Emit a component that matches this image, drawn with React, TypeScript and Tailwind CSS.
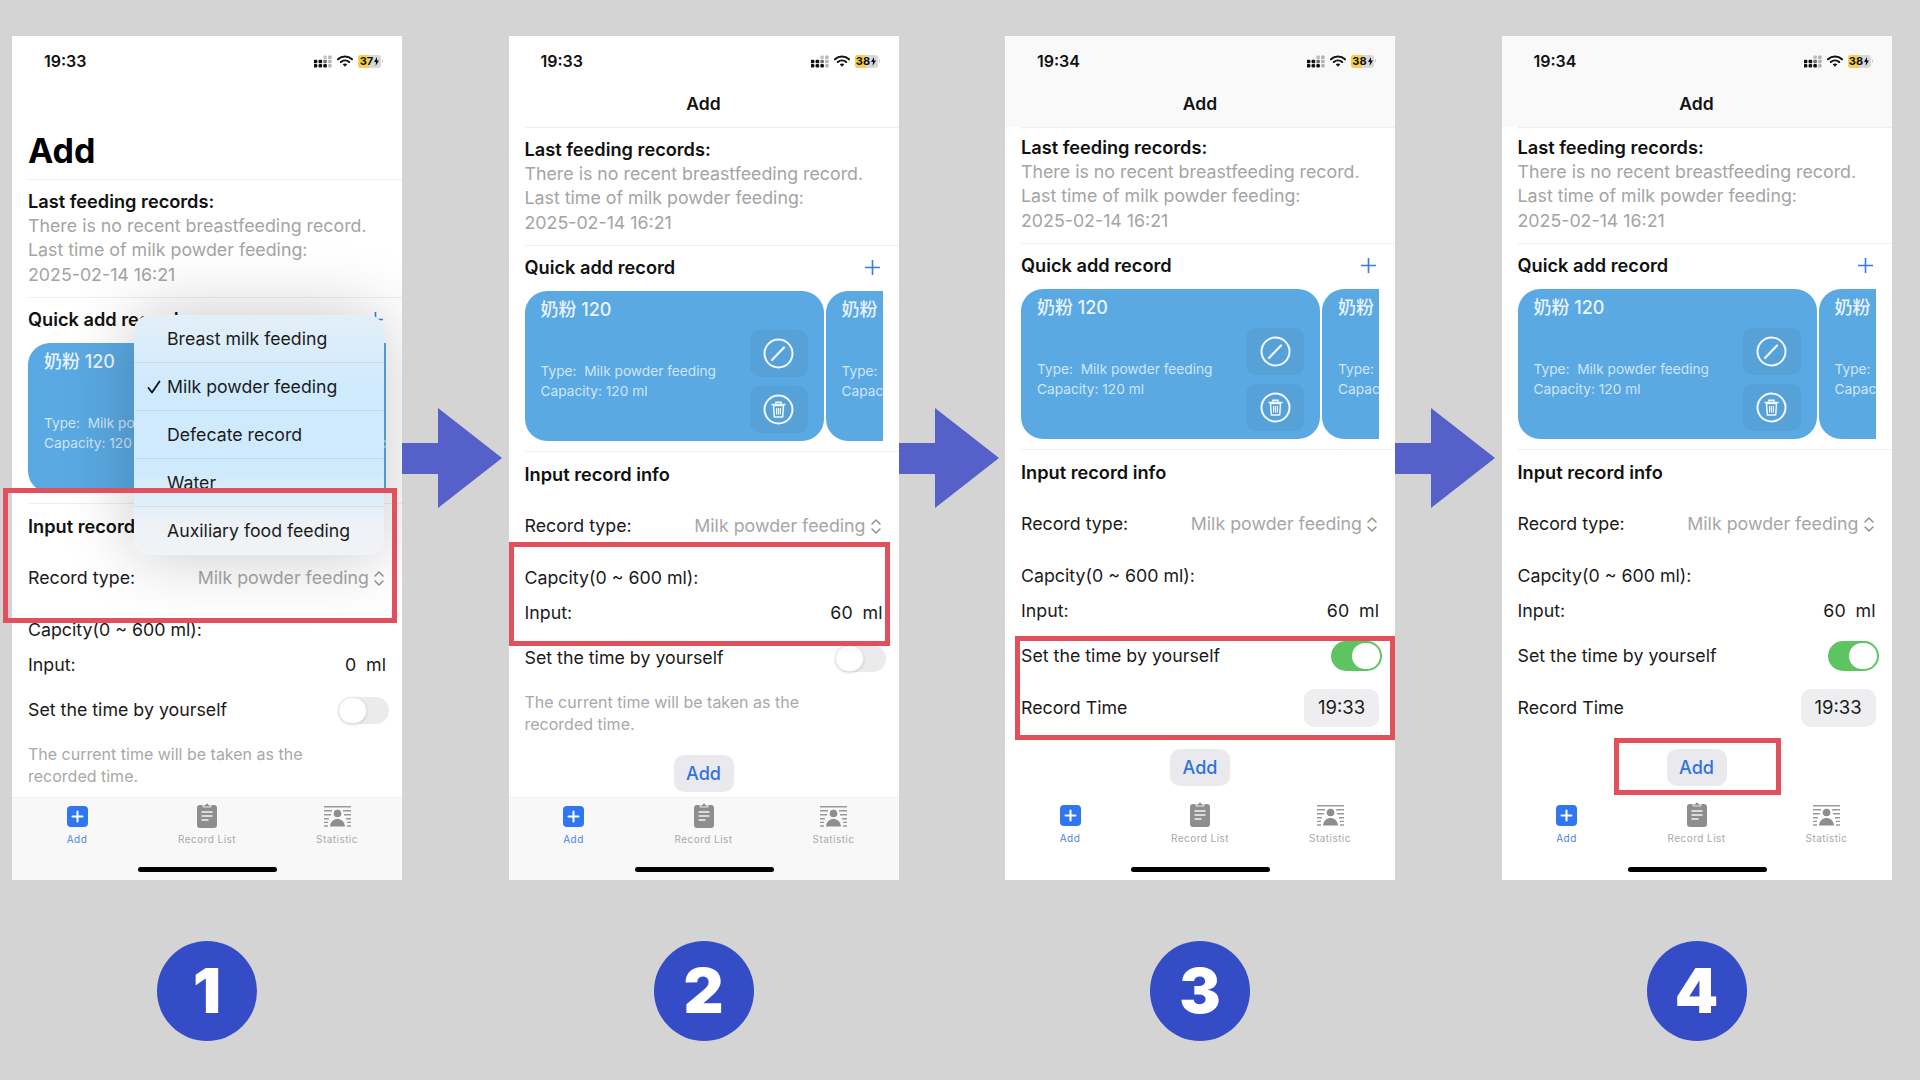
import React from "react";

function StatusIcons({ battery }: { battery: string }) {
  const dots: [number, number, number][] = [
    [1, 6, 1], [1, 10, 1], [5.5, 6, 1], [5.5, 10, 1], [10, 10, 1], [10, 6, 0.6], [10, 2, 0.25], [14.5, 10, 0.3], [14.5, 6, 0.3], [14.5, 2, 0.3],
  ];
  return (
    <div className="flex items-center gap-[5px]">
      <svg width="18" height="14" viewBox="0 0 17 13">
        {dots.map(([x, y, o], i) => (
          <rect key={i} x={x - 1.2} y={y - 0.7} width="3.4" height="3.4" rx="1" fill="#111" opacity={o} />
        ))}
      </svg>
      <svg width="16" height="12" viewBox="0 0 16 12">
        <path d="M1 4.200C5 .6 11 .6 15 4.200" fill="none" stroke="#111" strokeWidth="2.100" strokeLinecap="round" />
        <path d="M3.800 7C6.200 5 9.800 5 12.200 7" fill="none" stroke="#111" strokeWidth="2.100" strokeLinecap="round" />
        <path d="M8 11.800 5.700 9.200C7.100 8.200 8.900 8.200 10.300 9.200Z" fill="#111" />
      </svg>
      <div className="flex items-center">
        <div className="relative flex h-[13px] w-[23px] items-center overflow-hidden rounded-[3px] bg-[#d8d8d8]">
          <div className="h-full w-[11px] bg-[#f6d04d]" />
          <div className="absolute inset-0 flex items-center justify-center gap-[1px] text-[11px] leading-none font-bold text-[#111]">
            <span>{battery}</span>
            <svg width="5" height="9" viewBox="0 0 5 9"><path d="M3 0 0 5h2L1.600 9 5 3.600H3Z" fill="#111" /></svg>
          </div>
        </div>
        <div className="ml-[1px] h-[4px] w-[1px] rounded-r-sm bg-[#cfcfcf]" />
      </div>
    </div>
  );
}

function Card() {
  return (
    <div className="flex h-[150px] w-[299px] flex-none rounded-[22px] bg-[#5aa9e2] pr-[16px] pl-[16px]">
      <div className="flex-1">
        <div className="mt-[7px] h-[24px] text-[18px] leading-[24px] font-medium whitespace-nowrap text-[#eaf4fb]">奶粉 120</div>
        <div className="mt-[40px] text-[13.700px] leading-[19.500px] whitespace-nowrap text-[#cfe6f7]">
          <div>Type:&nbsp; Milk powder feeding</div>
          <div>Capacity: 120 ml</div>
        </div>
      </div>
      <div className="flex w-[58px] flex-none flex-col justify-end gap-[9px] pb-[8px]">
        <div className="flex h-[47px] items-center justify-center rounded-[10px] bg-[#55a1d8]">
          <svg width="31" height="31" viewBox="0 0 31 31" fill="none" stroke="#f4f9fd">
            <circle cx="15.500" cy="15.500" r="14" strokeWidth="2" />
            <path d="M9 22 21 9.500" strokeWidth="2.200" strokeLinecap="round" />
          </svg>
        </div>
        <div className="flex h-[47px] items-center justify-center rounded-[10px] bg-[#55a1d8]">
          <svg width="31" height="31" viewBox="0 0 31 31" fill="none" stroke="#f4f9fd">
            <circle cx="15.500" cy="15.500" r="14" strokeWidth="2" />
            <path d="M9 10.500h13M13 10V8.300h5V10" strokeWidth="1.500" strokeLinecap="round" />
            <path d="M10.500 11.500h10l-.8 11.500h-8.400Z" strokeWidth="1.500" strokeLinejoin="round" />
            <path d="M13.600 14v6.500M15.500 14v6.500M17.400 14v6.500" strokeWidth="1.200" />
          </svg>
        </div>
      </div>
    </div>
  );
}

function Toggle({ on }: { on: boolean }) {
  return on ? (
    <div className="mr-[-3px] flex h-[30px] w-[51px] items-center justify-end rounded-full bg-[#5ec462] pr-[2px]">
      <div className="h-[26px] w-[28px] rounded-full bg-white" />
    </div>
  ) : (
    <div className="mr-[-3px] flex h-[27px] w-[51px] items-center rounded-full bg-[#ebebec]">
      <div className="h-[27px] w-[29px] rounded-full border border-[#e6e6e6] bg-white shadow-sm" />
    </div>
  );
}

function TabBar({ grey }: { grey: boolean }) {
  return (
    <div className={`relative h-[83px] flex-none ${grey ? "border-t border-[#f0f0f0] bg-[#f8f8f9]" : "bg-white"}`}>
      <div className="grid grid-cols-3 text-[10px] leading-[12px] tracking-[0.45px]">
        <div className="flex flex-col items-center pt-[8px] text-[#4a86e0]">
          <svg width="21" height="21" viewBox="0 0 21 21">
            <rect width="21" height="21" rx="4" fill="#2f76f0" />
            <path d="M10.500 5.500v10M5.500 10.500h10" stroke="#fff" strokeWidth="2" strokeLinecap="round" />
          </svg>
          <div className="mt-[6px]">Add</div>
        </div>
        <div className="flex flex-col items-center pt-[4px] text-[#a8a8a8]">
          <svg width="20" height="26" viewBox="0 0 20 26">
            <rect y="3" width="20" height="23" rx="3" fill="#8e8e90" />
            <path d="M6 5V3h2.200a1.800 1.800 0 0 1 3.600 0H14v2Z" fill="#8e8e90" stroke="#fff" strokeWidth="0.800" />
            <path d="M4.500 10h11M4.500 14h11M4.500 18h7" stroke="#f4f4f4" strokeWidth="1.500" />
          </svg>
          <div className="mt-[5px]">Record List</div>
        </div>
        <div className="flex flex-col items-center pt-[8px] text-[#a8a8a8]">
          <svg width="27" height="21" viewBox="0 0 27 21">
            <path d="M0 .8h27M0 4.800h8M19 4.800h8M0 8.800h7M20 8.800h7M0 12.800h5M22 12.800h5M0 20h4M23 20h4" stroke="#9a9a9c" strokeWidth="1.400" />
            <path d="M0 16.400h4M23 16.400h4" stroke="#9a9a9c" strokeWidth="1.400" />
            <circle cx="13.500" cy="7.500" r="3.800" fill="#8e8e90" />
            <path d="M6 20.500c.6-5.500 4-7.600 7.500-7.600s6.900 2.100 7.500 7.600Z" fill="#8e8e90" />
          </svg>
          <div className="mt-[6px]">Statistic</div>
        </div>
      </div>
      <div className="absolute bottom-[8px] left-[126px] h-[5px] w-[139px] rounded-full bg-black" />
    </div>
  );
}

function Menu() {
  const rows = ["Breast milk feeding", "Milk powder feeding", "Defecate record", "Water", "Auxiliary food feeding"];
  return (
    <div className="absolute top-[279px] left-[122px] w-[250px] overflow-hidden rounded-[16px] bg-[linear-gradient(180deg,#e4eff7_0%,#cfeafd_30%,#cfeafd_65%,#eef2f6_88%,#f1f3f6_100%)] text-[17.700px] leading-[48px] text-[#1c1c1c] shadow-[0_0_70px_rgba(0,0,0,0.22)]">
      {rows.map((r, i) => (
        <div key={r} className={`relative h-[48px] pl-[33px] ${i < 4 ? "border-b border-[#00000010]" : ""}`}>
          {i === 1 && (
            <svg className="absolute top-[17px] left-[13px]" width="14" height="14" viewBox="0 0 14 14" fill="none">
              <path d="M1.500 8 5 12.500 12.500 1.500" stroke="#111" strokeWidth="1.800" strokeLinecap="round" strokeLinejoin="round" />
            </svg>
          )}
          {r}
        </div>
      ))}
    </div>
  );
}

type P = {
  time: string;
  battery: string;
  large?: boolean;
  greyTop?: boolean;
  pt: string;
  pb: string;
  on?: boolean;
  add?: boolean;
  menu?: boolean;
  box?: string;
};

function Phone({ time, battery, large, greyTop, pt, pb, on, add, menu, box }: P) {
  return (
    <div className="relative h-[844px] w-[390px] flex-none">
      <div className="relative flex h-full w-full flex-col overflow-hidden bg-white text-[17.800px] text-[#1a1a1a]">
        <div className={greyTop ? "bg-[#f9f9f9]" : "bg-white"}>
          <div className="flex h-[50px] items-center justify-between pr-[19px] pl-[32px]">
            <span className="text-[16px] font-semibold text-[#111]">{time}</span>
            <StatusIcons battery={battery} />
          </div>
          {large ? (
            <div className="h-[93px] pt-[44px] pl-[16px] text-[34px] leading-[41px] font-bold text-black">Add</div>
          ) : (
            <div className="flex h-[41px] items-center justify-center pb-[4px] text-[17.500px] font-semibold text-[#111]">Add</div>
          )}
        </div>
        <div className="ml-[16px] h-px flex-none bg-[#eeeeee]" />
        <div className={`flex-1 overflow-hidden pl-[16px] ${pt}`}>
          <div className={`pr-[15px] leading-[24.400px] whitespace-nowrap text-[#a4a4a4] ${pb}`}>
            <div className="mb-[1px] text-[18.200px] leading-[24px] font-semibold text-[#111]">Last feeding records:</div>
            <div>There is no recent breastfeeding record.</div>
            <div>Last time of milk powder feeding:</div>
            <div>2025-02-14 16:21</div>
          </div>
          <div className="h-px bg-[#eeeeee]" />
          <div className="flex h-[45px] items-center justify-between pr-[19px] pb-[2px]">
            <span className="text-[18.200px] font-semibold text-[#111]">Quick add record</span>
            <svg width="15" height="15" viewBox="0 0 15 15"><path d="M7.500 0v15M0 7.500h15" stroke="#3b78e7" strokeWidth="1.600" /></svg>
          </div>
          <div className="mr-[16px] flex gap-[2px] overflow-hidden">
            <Card />
            <Card />
          </div>
          <div className="mt-[10px] h-px bg-[#eeeeee]" />
          <div className="flex h-[45px] items-center text-[18.200px] font-semibold text-[#111]">Input record info</div>
          <div className="pr-[16px]">
            <div className="flex h-[58px] items-center justify-between">
              <span>Record type:</span>
              <span className="mr-[2px] flex items-center gap-[5px] text-[#a6a6a6]">
                Milk powder feeding
                <svg width="10" height="15" viewBox="0 0 10 15" fill="none" stroke="#8c8c8c" strokeWidth="1.400" strokeLinecap="round" strokeLinejoin="round">
                  <path d="M1 5 5 1l4 4M1 10l4 4 4-4" />
                </svg>
              </span>
            </div>
            <div className="flex h-[47px] items-center">Capcity(0 ~ 600 ml):</div>
            <div className="flex h-[23px] items-center justify-between">
              <span>Input:</span>
              <span className="whitespace-pre">{menu ? "0  ml" : "60  ml"}</span>
            </div>
            <div className="flex h-[66px] items-center justify-between">
              <span>Set the time by yourself</span>
              <Toggle on={!!on} />
            </div>
            {on ? (
              <div className="flex h-[38px] items-center justify-between">
                <span>Record Time</span>
                <span className="flex h-[38px] w-[75px] items-center justify-center rounded-[10px] bg-[#eeeef0] text-[18.500px]">19:33</span>
              </div>
            ) : (
              <div className="text-[16px] leading-[22px] whitespace-nowrap text-[#a8a8a8]">The current time will be taken as the<br />recorded time.</div>
            )}
          </div>
          {add && (
            <div className={`flex justify-center pr-[16px] ${on ? "mt-[22px]" : "mt-[20px]"}`}>
              <div className="flex h-[37px] w-[60px] items-center justify-center rounded-[10px] bg-[#e9e9ee] text-[18px] font-medium text-[#2f72e0]">Add</div>
            </div>
          )}
        </div>
        <TabBar grey={!greyTop} />
        {menu && <Menu />}
      </div>
      {box && <div className={`absolute border-[5px] border-[#e2505e] ${box}`} />}
    </div>
  );
}

function Badge({ n }: { n: string }) {
  return (
    <div className="flex h-[100px] w-[100px] items-center justify-center rounded-full bg-[#344dc7] text-[62px] leading-none font-black text-white">{n}</div>
  );
}

function Column({ n, children }: { n: string; children: React.ReactNode }) {
  return (
    <div className="flex w-[390px] flex-none flex-col items-center gap-[61px]">
      {children}
      <Badge n={n} />
    </div>
  );
}

function Arrow() {
  return (
    <div className="mt-[372px] h-[100px] w-[106.500px] flex-none self-start">
      <svg width="100" height="100" viewBox="0 0 100 100">
        <path d="M0 35h36V0l64 50-64 50V66H0Z" fill="#5560c9" />
      </svg>
    </div>
  );
}

export default function App() {
  return (
    <div className="flex h-[1080px] w-[1920px] items-start overflow-hidden bg-[#d4d4d4] pt-[36px] pl-[12px] [font-family:Inter,'Noto_Sans_CJK_SC',sans-serif]">
      <Column n="1">
        <Phone time="19:33" battery="37" large pt="pt-[9px]" pb="pb-[10px]" menu box="top-[452px] left-[-9px] h-[135px] w-[394px]" />
      </Column>
      <Arrow />
      <Column n="2">
        <Phone time="19:33" battery="38" pt="pt-[9px]" pb="pb-[10px]" add box="top-[506px] left-[0px] h-[104px] w-[381px]" />
      </Column>
      <Arrow />
      <Column n="3">
        <Phone time="19:34" battery="38" greyTop pt="pt-[7px]" pb="pb-[10px]" on add box="top-[600px] left-[10px] h-[104px] w-[380px]" />
      </Column>
      <Arrow />
      <Column n="4">
        <Phone time="19:34" battery="38" greyTop pt="pt-[7px]" pb="pb-[10px]" on add box="top-[702px] left-[112px] h-[57px] w-[167px]" />
      </Column>
    </div>
  );
}
